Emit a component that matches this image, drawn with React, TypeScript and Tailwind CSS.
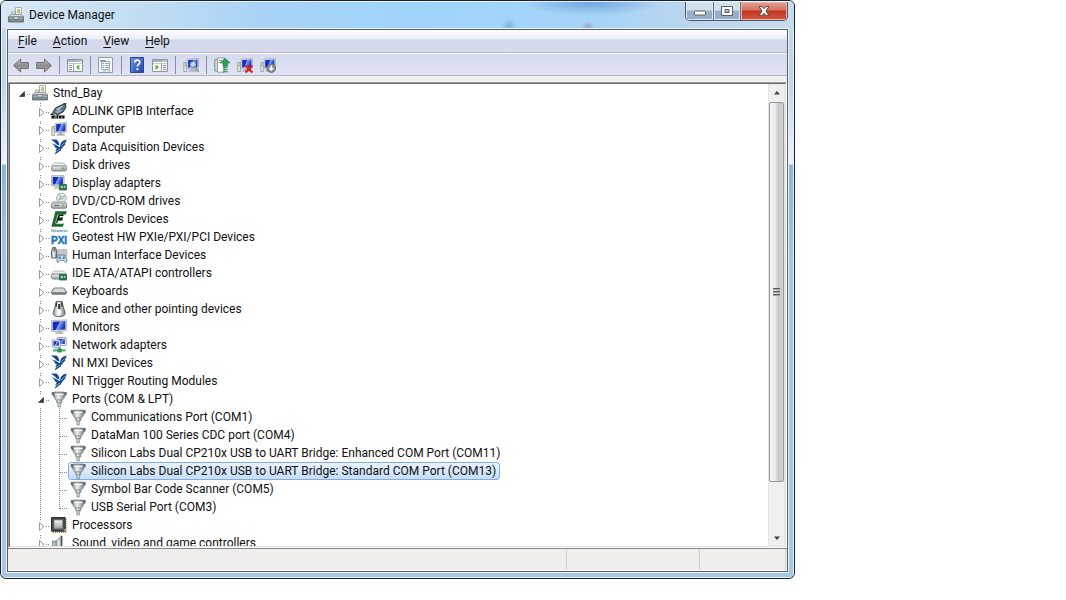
import type { ReactNode } from "react";

type IconName =
  | "root" | "gpib" | "computer" | "ni" | "disk" | "display" | "dvd" | "econtrols" | "geotest"
  | "hid" | "ide" | "keyboard" | "mouse" | "monitor" | "network" | "port" | "cpu" | "sound";

type Item = {
  label: string;
  icon: IconName;
  level: 0 | 1 | 2;
  open?: boolean;
  selected?: boolean;
  last?: boolean;
};

const items: Item[] = [
  { label: "Stnd_Bay", icon: "root", level: 0, open: true },
  { label: "ADLINK GPIB Interface", icon: "gpib", level: 1 },
  { label: "Computer", icon: "computer", level: 1 },
  { label: "Data Acquisition Devices", icon: "ni", level: 1 },
  { label: "Disk drives", icon: "disk", level: 1 },
  { label: "Display adapters", icon: "display", level: 1 },
  { label: "DVD/CD-ROM drives", icon: "dvd", level: 1 },
  { label: "EControls Devices", icon: "econtrols", level: 1 },
  { label: "Geotest HW PXIe/PXI/PCI Devices", icon: "geotest", level: 1 },
  { label: "Human Interface Devices", icon: "hid", level: 1 },
  { label: "IDE ATA/ATAPI controllers", icon: "ide", level: 1 },
  { label: "Keyboards", icon: "keyboard", level: 1 },
  { label: "Mice and other pointing devices", icon: "mouse", level: 1 },
  { label: "Monitors", icon: "monitor", level: 1 },
  { label: "Network adapters", icon: "network", level: 1 },
  { label: "NI MXI Devices", icon: "ni", level: 1 },
  { label: "NI Trigger Routing Modules", icon: "ni", level: 1 },
  { label: "Ports (COM & LPT)", icon: "port", level: 1, open: true },
  { label: "Communications Port (COM1)", icon: "port", level: 2 },
  { label: "DataMan 100 Series CDC port (COM4)", icon: "port", level: 2 },
  { label: "Silicon Labs Dual CP210x USB to UART Bridge: Enhanced COM Port (COM11)", icon: "port", level: 2 },
  { label: "Silicon Labs Dual CP210x USB to UART Bridge: Standard COM Port (COM13)", icon: "port", level: 2, selected: true },
  { label: "Symbol Bar Code Scanner (COM5)", icon: "port", level: 2 },
  { label: "USB Serial Port (COM3)", icon: "port", level: 2, last: true },
  { label: "Processors", icon: "cpu", level: 1 },
  { label: "Sound, video and game controllers", icon: "sound", level: 1 },
];

function Svg({ children }: { children: ReactNode }) {
  return (
    <svg viewBox="0 0 16 16" className="block size-4 shrink-0 overflow-visible" aria-hidden="true">
      {children}
    </svg>
  );
}

function Gradients() {
  return (
    <svg className="absolute size-0" aria-hidden="true">
      <defs>
        <linearGradient id="screen" x1="0" y1="0" x2="1" y2="0.35">
          <stop offset="0" stopColor="#0a1fae" />
          <stop offset="0.48" stopColor="#1434c8" />
          <stop offset="0.55" stopColor="#86a8f2" />
          <stop offset="1" stopColor="#1633b8" />
        </linearGradient>
        <linearGradient id="metal" x1="0" y1="0" x2="0" y2="1">
          <stop offset="0" stopColor="#f4f6f6" />
          <stop offset="1" stopColor="#9aa2a5" />
        </linearGradient>
        <linearGradient id="metalSide" x1="0" y1="0" x2="1" y2="0">
          <stop offset="0" stopColor="#8c9599" />
          <stop offset="0.4" stopColor="#f2f5f6" />
          <stop offset="1" stopColor="#7d868a" />
        </linearGradient>
        <linearGradient id="arrow" x1="0" y1="0" x2="0" y2="1">
          <stop offset="0" stopColor="#c6c6c6" />
          <stop offset="0.5" stopColor="#8f8f8f" />
          <stop offset="1" stopColor="#a9a9a9" />
        </linearGradient>
        <linearGradient id="help" x1="0" y1="0" x2="1" y2="1">
          <stop offset="0" stopColor="#6d8fe0" />
          <stop offset="1" stopColor="#2446a8" />
        </linearGradient>
      </defs>
    </svg>
  );
}

function RootIcon() {
  return (
    <Svg>
      <path d="M7.5 8V0.5h6V8z" fill="#f2f4ee" stroke="#9aa09c" strokeWidth="0.8" />
      <path d="M9.5 2.5h2.2v3.6H9.5z" fill="#c8da6a" stroke="#8ba04a" strokeWidth="0.5" />
      <path d="M3.5 5H7v4H3.5z" fill="#dde2e4" stroke="#8d9598" strokeWidth="0.7" />
      <path d="M0.6 10 2.6 7.6h10.8l2 2.4z" fill="#dfe3e4" stroke="#7b8386" strokeWidth="0.7" />
      <path d="M0.5 10h15v5H0.5z" fill="#7f8a90" stroke="#59636a" strokeWidth="0.8" />
      <path d="M1 10.6h14v1.2H1z" fill="#aeb8bd" />
      <path d="M5.8 9.6h4.4V12H5.8z" fill="#e5e8e9" stroke="#555d60" strokeWidth="0.6" />
    </Svg>
  );
}

function PcGroup() {
  return (
    <g>
      <path d="M0.8 5.5h2.8v9H0.8z" fill="#e3e6e3" stroke="#84908a" strokeWidth="0.7" />
      <path d="M1.5 7h1.4M1.5 8.7h1.4" stroke="#5fa45a" strokeWidth="0.7" />
      <path d="M4.2 2.4 15.4 1.4v9.7L4.2 11.3z" fill="#dfe2e8" stroke="#9da3ae" strokeWidth="0.7" />
      <path d="M5.2 3.3 14.4 2.5v7.7L5.2 10.4z" fill="url(#screen)" />
      <path d="M8 11.3h3.4V13H8zM6 13h7.4v1.5H6z" fill="#c9cdd2" stroke="#8b9197" strokeWidth="0.4" />
    </g>
  );
}

function DiskBody() {
  return (
    <g>
      <path d="M3.2 6h9.6l2.7 3.3H0.5z" fill="#eef0f0" stroke="#9ba1a3" strokeWidth="0.7" />
      <rect x="0.5" y="9" width="15" height="5" rx="1.8" fill="url(#metal)" stroke="#757d80" strokeWidth="0.9" />
      <path d="M10.5 10.4h3v2h-3z" fill="#6cb348" />
    </g>
  );
}

function Chip() {
  return (
    <g>
      <path d="M8.5 9.5h7v5.5h-7z" fill="#2e8053" stroke="#1b5438" strokeWidth="0.7" />
      <path d="M10 11h1.8v2H10zM13 11h1.5v1.4H13z" fill="#b8dfc4" />
    </g>
  );
}

const icons: Record<IconName, ReactNode> = {
  root: <RootIcon />,
  gpib: (
    <Svg>
      <path d="M14 0.5 10.5 2 4.2 5.2 2 9l4.3 3 6-3.2L15 4z" fill="#5d7186" stroke="#1d2732" strokeWidth="0.9" />
      <path d="M5 6.2 11 3l2-.5L7 7z" fill="#c9daea" />
      <path d="m3.6 9 5.4-3.1 2.5 1.6-5.2 2.9z" fill="#90a8be" />
      <path d="M12 1 15.5.8M2 9.5.4 11.5 4 11" stroke="#1d2732" strokeWidth="1.2" fill="none" />
      <path d="M0.5 12.5h13v3H0.5z" fill="#070707" />
      <path d="M3 14h3M7.5 13.4v2M10 14.2h1.6" stroke="#fff" strokeWidth="0.8" />
    </Svg>
  ),
  computer: (
    <Svg>
      <PcGroup />
    </Svg>
  ),
  ni: (
    <Svg>
      <path d="M0 0.6H5.4L7.4 2.6 8.6 6.6 5.6 5.4 3.6 3.2z" fill="#134a8f" />
      <path d="M0.8 4.2 4.6 5.8 8.8 8.2 9.8 4 12.4 1.6 16 0.4 14.6 2.4 15.6 2.8 13.8 4.8 14.4 5.4 11.4 8.4 9.6 11.6 3.6 15.8 5.2 12 4.2 11.6 6 9.6 3.4 8 4 7.2z" fill="#134a8f" />
      <path d="M10 7.4 13.6 3.4M5.2 12.4 9 10.2" stroke="#fff" strokeWidth="0.5" fill="none" />
    </Svg>
  ),
  disk: (
    <Svg>
      <DiskBody />
    </Svg>
  ),
  display: (
    <Svg>
      <path d="M0.6 0.8h12.4v10H0.6z" fill="#dfe2e8" stroke="#8f97a3" strokeWidth="0.8" />
      <path d="M1.8 1.9H11.8v7.6H1.8z" fill="url(#screen)" />
      <path d="M4 11h4v1.5H4zM2.5 12.5H8V14H2.5z" fill="#c3c8cd" />
      <Chip />
    </Svg>
  ),
  dvd: (
    <Svg>
      <circle cx="10.4" cy="5" r="4.8" fill="#e4e8e9" stroke="#8f979a" strokeWidth="0.8" />
      <path d="M10.4 5 8 1.2M10.4 5l3.8-2.2M10.4 5 7 7" stroke="#8fb883" strokeWidth="1" />
      <circle cx="10.4" cy="5" r="1.4" fill="#fff" stroke="#7a8386" strokeWidth="0.8" />
      <path d="M2.8 8.4h10.5l2.2 2H0.5z" fill="#eceeee" stroke="#9ba1a3" strokeWidth="0.6" />
      <rect x="0.5" y="10" width="15" height="5.2" rx="1.3" fill="url(#metal)" stroke="#6f777a" strokeWidth="0.9" />
      <path d="M3 12.4h5.5" stroke="#555d60" />
      <path d="M11.2 11.5h2.4v1.9h-2.4z" fill="#6cb348" />
    </Svg>
  ),
  econtrols: (
    <Svg>
      <path d="M4.4 0.2h11.4l-.9 3.4H7.5L6.7 6.3h5.5l-.9 3.4H5.9l-.8 2.7h7.8l-1 3.4H0.4z" fill="#1d6b2b" />
      <path d="M7.6 3.6h5.2l-.4 1.4H8.8L8 7.6h3.4l-.4 1.4H7.2l-1 3.2H4.6z" fill="#0f1611" />
      <path d="M7 3.6 4.4 12.4M5 12.6h7" stroke="#fff" strokeWidth="0.6" />
    </Svg>
  ),
  geotest: (
    <Svg>
      <text x="0" y="3.2" fontSize="4.4" fontWeight="700" fontFamily="Liberation Sans, sans-serif" fill="#2f8ba0">Geotest</text>
      <text x="0" y="15" fontSize="10" fontWeight="700" fontFamily="Liberation Sans, sans-serif" fill="#2176bd" stroke="#2176bd" strokeWidth="0.5">PXI</text>
    </Svg>
  ),
  hid: (
    <Svg>
      <path d="M6 2.5h9.8V9H6z" fill="#d9dddf" stroke="#9aa1a5" strokeWidth="0.6" />
      <path d="M7 4h8.4M7 5.9h8.4M7 7.6h8.4" stroke="#8a9195" strokeWidth="0.9" strokeDasharray="1 0.6" />
      <path d="M1.6 0.6h3l1.2 5-.5 5.4H.8L.3 6z" fill="url(#metalSide)" stroke="#4c5458" strokeWidth="0.9" />
      <path d="M3.1 1v3.4" stroke="#333" strokeWidth="1" />
      <path d="M7.4 8.5c2-.8 4.9-.8 6.8 0 1.3 1.6 2.3 5.8 1.2 6.8-1.4.6-2.2-1.8-3.2-2H9.6c-1 .2-1.8 2.6-3.3 2-.9-1-.2-5.2 1.1-6.8z" fill="#cbd9e6" stroke="#5c7288" strokeWidth="0.8" />
      <circle cx="8.8" cy="10.8" r="1.2" fill="#3f82c4" />
      <circle cx="12.9" cy="10.8" r="1.2" fill="#3f82c4" />
    </Svg>
  ),
  ide: (
    <Svg>
      <DiskBody />
      <Chip />
    </Svg>
  ),
  keyboard: (
    <Svg>
      <path d="M3.2 5h9.6l2.9 4.3-1 1.9H1.3l-1-1.9z" fill="#84898c" stroke="#54595c" strokeWidth="0.8" />
      <path d="M3.5 5.6h9L14.8 9H1.2z" fill="#eceeee" />
      <path d="M3 6.7h10M2.5 8.1h11.2" stroke="#a2a7a9" strokeWidth="0.7" strokeDasharray="1 0.5" />
    </Svg>
  ),
  mouse: (
    <Svg>
      <path d="M5.2 0.4h5.8l1.2 5.2 1.9 6.2c0 2.9-2 3.9-5.9 3.9s-6-1-6-3.9l2-6.2z" fill="url(#metalSide)" stroke="#484e51" strokeWidth="0.9" />
      <path d="M5.6 1.2 5.2 6M10.6 1.2l.5 4.8" stroke="#373c3f" strokeWidth="1.2" />
      <path d="M7.2 3h2v5h-2z" fill="#2b2f32" />
      <circle cx="8.2" cy="11.3" r="2.2" fill="#fff" />
    </Svg>
  ),
  monitor: (
    <Svg>
      <path d="M0.5 1.6 15.5.8v11L0.5 12.4z" fill="#e3e5e9" stroke="#9ba1aa" strokeWidth="0.7" />
      <path d="M1.7 2.7 14.4 2v8.6L1.7 11.2z" fill="url(#screen)" />
      <path d="M6.5 12.3h3.8v1.2H6.5zM4.5 13.5h7.6v1.4H4.5z" fill="#c9cdd2" stroke="#9ba1a5" strokeWidth="0.4" />
    </Svg>
  ),
  network: (
    <Svg>
      <path d="M6.2 0.6h9v7.9h-9z" fill="#e5e9f2" stroke="#7e89a5" strokeWidth="0.7" />
      <path d="M7.6 1.9h6.2v5H7.6z" fill="url(#screen)" />
      <path d="M1.2 3h8v7.2h-8z" fill="#eceff5" stroke="#7e89a5" strokeWidth="0.7" />
      <path d="M2.5 4.3h5.4v4.4H2.5z" fill="url(#screen)" />
      <path d="M3.3 10.4h4v1.2h-4z" fill="#aeb4bc" />
      <path d="M7.2 10.5h2.6v2.4H7.2z" fill="#45b074" />
      <path d="M2 12.4h12.6v2H2z" fill="#3fae6b" />
      <path d="M6.5 11.8h4.3v3.6H6.5z" fill="#2c8f55" />
    </Svg>
  ),
  port: (
    <Svg>
      <path d="M1.2 2h14v2.2h-14z" fill="#b8bfc2" stroke="#7c8487" strokeWidth="0.6" />
      <path d="M3 1h10.4v5.4L11.6 9H4.8L3 6.4z" fill="url(#metalSide)" stroke="#7c8487" strokeWidth="0.7" />
      <path d="M3.6 1.8h9.2" stroke="#6c7477" strokeWidth="0.8" />
      <path d="M4 3.4h8.4" stroke="#fff" strokeWidth="1.2" />
      <path d="M0.9 1h2v4.2h-1V3.4h-1zM15.5 1h-2v4.2h1V3.4h1z" fill="#5f676a" />
      <path d="M5.6 9h5.2v2.8H5.6z" fill="url(#metalSide)" stroke="#777f82" strokeWidth="0.6" />
      <path d="M6.8 11.8h2.8V16H6.8z" fill="#c3cacc" stroke="#7b8386" strokeWidth="0.6" />
    </Svg>
  ),
  cpu: (
    <Svg>
      <path d="M15 2v13M2 15.2h13" stroke="#a8903f" strokeWidth="1.4" strokeDasharray="1 1" />
      <path d="M0.5 0.5h13.7v13.7H0.5z" fill="#4c4c4c" stroke="#2e2e2e" />
      <path d="M3 3h8.6v8.6H3z" fill="url(#metal)" stroke="#888" strokeWidth="0.7" />
      <path d="M12 12.2h2.6v2.4z" fill="#d9c46a" />
    </Svg>
  ),
  sound: (
    <Svg>
      <path d="M1.5 6h4v6h-4z" fill="#b2bcc2" stroke="#69747a" strokeWidth="0.7" />
      <path d="M5 6 10.7.8v15.4L5 12z" fill="url(#metalSide)" stroke="#6d787e" strokeWidth="0.7" />
      <path d="M10.7 1v15" stroke="#3e4a50" strokeWidth="1.2" />
    </Svg>
  ),
};

function Guides({ item }: { item: Item }) {
  const { level, open, last } = item;
  return (
    <svg viewBox="0 0 12 18" className="block h-[18px] w-3 shrink-0" aria-hidden="true">
      <g stroke="#858585" strokeDasharray="1 1" fill="none">
        {level === 1 && <path d="M3.5 1v3" />}
        {level === 2 && <path d={last ? "M3.5 0v11M4 10.5h8" : "M3.5 0v18M4 10.5h8"} />}
        {level < 2 && <path d="M9 10.5h3" />}
      </g>
      {level < 2 && open && <path d="M6.5 7.5v5H1.5z" fill="#3f3f3f" stroke="#1f1f1f" strokeWidth="0.6" />}
      {level < 2 && !open && <path d="M2.5 6.5v8l4.5-4z" fill="#fff" stroke="#999" />}
    </svg>
  );
}

function Indent({ dotted }: { dotted?: boolean }) {
  return (
    <svg viewBox="0 0 19 18" className="block h-[18px] w-[19px] shrink-0" aria-hidden="true">
      {dotted && <path d="M3.5 0v18" stroke="#858585" strokeDasharray="1 1" />}
    </svg>
  );
}

function TreeRow({ item }: { item: Item }) {
  return (
    <li
      role="treeitem"
      aria-level={item.level + 1}
      aria-expanded={item.open}
      aria-selected={!!item.selected}
      className="flex h-[18px] shrink-0 items-center pl-2"
    >
      {item.level > 0 && <Indent />}
      {item.level > 1 && <Indent dotted />}
      {item.level < 2 ? (
        <button type="button" aria-label={`Toggle ${item.label}`} className="shrink-0">
          <Guides item={item} />
        </button>
      ) : (
        <Guides item={item} />
      )}
      <span
        className={
          item.selected
            ? "flex h-[18px] items-center gap-[5px] rounded-[3px] border border-[#84acdd] bg-linear-to-b from-[#e9f2fd] to-[#c5defa] pr-[3px] pl-px"
            : "flex h-[18px] items-center gap-[5px] border border-transparent pr-[3px] pl-px"
        }
      >
        {icons[item.icon]}
        <span className="leading-4 whitespace-nowrap">{item.label}</span>
      </span>
    </li>
  );
}

function Pane({ flip }: { flip?: boolean }) {
  return (
    <Svg>
      <path d="M0.5 2.5h15v12H0.5z" fill="#f7f8f8" stroke="#8d969c" />
      <path d="M1 3h14v2H1z" fill="#aab4bd" />
      <path d="M11 4h1M13 4h1" stroke="#fff" />
      <path d="M1 6.5h14" stroke="#c3c9cd" />
      {flip ? (
        <g>
          <path d="M9.5 6.5v8" stroke="#9aa2a8" />
          <path d="M3.5 7.7v5.2L7 10.3z" fill="#4fb32c" />
          <path d="M11 8.5h3M11 10.5h3M11 12.5h3" stroke="#89939a" />
        </g>
      ) : (
        <g>
          <path d="M6.5 6.5v8" stroke="#9aa2a8" />
          <path d="M12.3 7.7v5.2L9 10.3z" fill="#4fb32c" />
          <path d="M2 8.5h3M2 10.5h3M2 12.5h3" stroke="#89939a" />
        </g>
      )}
    </Svg>
  );
}

type Tool = { label: string; icon: ReactNode } | null;

const tools: Tool[] = [
  {
    label: "Back",
    icon: (
      <Svg>
        <path d="M0.6 8.5 7.6 2v3.6h7.8v5.8H7.6V15z" fill="url(#arrow)" stroke="#6f6f6f" strokeLinejoin="round" />
      </Svg>
    ),
  },
  {
    label: "Forward",
    icon: (
      <Svg>
        <path d="M15.4 8.5 8.4 2v3.6H0.6v5.8h7.8V15z" fill="url(#arrow)" stroke="#6f6f6f" strokeLinejoin="round" />
      </Svg>
    ),
  },
  null,
  { label: "Show/Hide Console Tree", icon: <Pane /> },
  null,
  {
    label: "Properties",
    icon: (
      <Svg>
        <path d="M0.5 0.5h14v15h-14z" fill="#f7f8f8" stroke="#949ca2" />
        <path d="M3.5 4.5h8v8h-8z" fill="#fff" stroke="#a9b0b5" />
        <path d="M2.5 3.5h5v1h-5z" fill="#fff" stroke="#8b959c" />
        <path d="M4.5 6.5H6M4.5 8.5H6M4.5 10.5H6" stroke="#4ba7c9" />
        <path d="M7 6.5h4M7 8.5h4M7 10.5h4" stroke="#9aa2a8" />
        <path d="M5 14h3M9.5 14h3" stroke="#6bbad4" />
      </Svg>
    ),
  },
  null,
  {
    label: "Help",
    icon: (
      <Svg>
        <path d="M1.5 0.5h13v15h-13z" fill="url(#help)" stroke="#2b4796" />
        <path d="M3 1v14" stroke="#6d8edb" />
        <path d="M5.8 5.6c0-3.3 5-3.2 5-.2 0 2-2.4 2.1-2.4 4.2" fill="none" stroke="#fff" strokeWidth="1.7" />
        <circle cx="8.4" cy="12.2" r="1.1" fill="#fff" />
      </Svg>
    ),
  },
  { label: "Show/Hide Action Pane", icon: <Pane flip /> },
  null,
  {
    label: "Scan for hardware changes",
    icon: (
      <Svg>
        <PcGroup />
        <circle cx="10" cy="7.4" r="3" fill="#cfe0f6" fillOpacity="0.9" stroke="#6f86a2" />
        <path d="m12.2 10 3 4.3" stroke="#8693a1" strokeWidth="1.8" strokeLinecap="round" />
      </Svg>
    ),
  },
  null,
  {
    label: "Update Driver Software",
    icon: (
      <Svg>
        <path d="M0.8 2.5h3.2V14H0.8z" fill="#d5dad7" stroke="#7e8983" strokeWidth="0.9" />
        <path d="M3.5 1h6.7v14.2H3.5z" fill="#fafbf9" stroke="#8d9790" strokeWidth="0.9" />
        <path d="M5 3.5h3.4M5 5.5h2" stroke="#7b8780" strokeWidth="0.9" />
        <path d="M11 1.2 16 6h-2.6v3.3H9V6H6.4z" fill="#2fa05c" stroke="#1e7a40" strokeWidth="0.6" />
        <path d="M8.8 10.8h4.8M8.8 12.8h4.8M8.8 14.8h4.8" stroke="#278b4c" strokeWidth="1.1" />
      </Svg>
    ),
  },
  {
    label: "Uninstall",
    icon: (
      <Svg>
        <PcGroup />
        <path d="m8.6 8.4 6.8 7M15.4 8.4l-6.8 7" stroke="#da1f1f" strokeWidth="2.2" />
      </Svg>
    ),
  },
  {
    label: "Disable",
    icon: (
      <Svg>
        <PcGroup />
        <circle cx="11.3" cy="11.2" r="4.3" fill="#8a8e92" stroke="#5e6265" strokeWidth="0.8" />
        <path d="M11.3 8.4v3.4" stroke="#fff" strokeWidth="1.7" />
        <path d="M8.5 11.2h5.6l-2.8 2.9z" fill="#fff" />
      </Svg>
    ),
  },
];

const menus = [
  { key: "F", rest: "ile" },
  { key: "A", rest: "ction" },
  { key: "V", rest: "iew" },
  { key: "H", rest: "elp" },
];

function TitleBar() {
  return (
    <header className="flex h-[27px] items-start border-t border-[#e4f3fd] bg-[radial-gradient(ellipse_70px_14px_at_590px_0px,#6fa6dc,transparent),radial-gradient(circle_7px_at_587px_26px,#9a9ecb,transparent),radial-gradient(circle_8px_at_508px_24px,#86b4d9,transparent),linear-gradient(90deg,#d8e8f5_0px,#c6def2_120px,#a8d3f6_260px,#9fd3fa_420px,#a6d4f8_600px,#bcd6ec_690px,#c8dbeb_100%)] pr-[6px] pl-[7px]">
      <div className="flex h-full min-w-0 flex-1 items-center gap-[5px]">
        <RootIcon />
        <h1 className="truncate leading-4">Device Manager</h1>
      </div>
      <div className="flex h-[19px] overflow-hidden rounded-b-[5px] border border-t-0 border-[#46586b]">
        <button type="button" aria-label="Minimize" className="flex w-7 items-center justify-center border-r border-[#5d7186] bg-linear-to-b from-[#d3e0ec] from-45% to-[#98afc6] to-50% shadow-[inset_0_0_0_1px_#dbe8f3]">
          <svg viewBox="0 0 14 10" className="h-[10px] w-[14px]" aria-hidden="true">
            <rect x="1.5" y="5" width="11" height="4" rx="0.6" fill="#fff" stroke="#56626e" />
          </svg>
        </button>
        <button type="button" aria-label="Maximize" className="flex w-[27px] items-center justify-center border-r border-[#5d7186] bg-linear-to-b from-[#d3e0ec] from-45% to-[#98afc6] to-50% shadow-[inset_0_0_0_1px_#dbe8f3]">
          <svg viewBox="0 0 12 10" className="h-[10px] w-3" aria-hidden="true">
            <path d="M0.5 0.5h11v9h-11zM4 3.5v3h4v-3z" fill="#fff" fillRule="evenodd" stroke="#56626e" />
          </svg>
        </button>
        <button type="button" aria-label="Close" className="flex w-[46px] items-center justify-center bg-[linear-gradient(#e2a295,#d4705d_45%,#bf3420_50%,#d05a40)] shadow-[inset_0_0_0_1px_#eab5a8]">
          <svg viewBox="0 0 12 10" className="h-[10px] w-3" aria-hidden="true">
            <path d="M1 .6h3.2L6 2.8 7.8.6H11L7.8 5 11 9.4H7.8L6 7.2 4.2 9.4H1L4.2 5z" fill="#fff" stroke="#5b4a50" />
          </svg>
        </button>
      </div>
    </header>
  );
}

function ScrollBar() {
  return (
    <div className="flex w-[17px] shrink-0 flex-col border-x border-[#e3e3e3] bg-[#efefef]">
      <button type="button" aria-label="Scroll up" className="flex h-[18px] items-center justify-center">
        <svg viewBox="0 0 6 4" className="h-1 w-[6px]" aria-hidden="true">
          <path d="m3 0 3 3.5H0z" fill="#404040" />
        </svg>
      </button>
      <div className="min-h-0 flex-1">
        <div className="flex h-[89%] items-center justify-center rounded-[2px] border border-[#969696] bg-[linear-gradient(90deg,#f6f6f6,#e8e8ea_45%,#c6c6ca_60%,#d4d4d8)]">
          <svg viewBox="0 0 7 9" className="h-[9px] w-[7px]" aria-hidden="true">
            <path d="M0 .5h7M0 3.5h7M0 6.5h7" stroke="#5a5a5a" />
            <path d="M0 1.5h7M0 4.5h7M0 7.5h7" stroke="#a5a5a5" />
          </svg>
        </div>
      </div>
      <button type="button" aria-label="Scroll down" className="flex h-[17px] items-center justify-center">
        <svg viewBox="0 0 6 4" className="h-1 w-[6px]" aria-hidden="true">
          <path d="m3 4 3-3.5H0z" fill="#404040" />
        </svg>
      </button>
    </div>
  );
}

export default function App() {
  return (
    <div className="h-screen overflow-hidden bg-white pb-[21px] font-['Roboto','Noto_Sans',sans-serif] text-[12px] text-[#101010]">
      <Gradients />
      <main className="flex h-full w-full max-w-[795px] flex-col overflow-hidden rounded-[6px] border border-[#1a222e] bg-[linear-gradient(#c4dbee,#bdd4e9_80px,#edf3f7_163px,#8fb4d6_164px,#a4c4e2_260px,#a9c7e4)]">
        <TitleBar />
        <div className="flex min-h-0 flex-1 flex-col border border-t-0 border-[#e6f2fb] px-1 pb-1">
          <div className="flex min-h-0 flex-1 flex-col border border-[#f0f7fc]">
            <div className="flex min-h-0 flex-1 flex-col border border-[#4d5f70] bg-[#f0f0f0]">
              <nav aria-label="Menu bar" className="flex h-[23px] shrink-0 items-center border-b border-[#b3b7cb] bg-[linear-gradient(#fdfeff,#e9eef7_9px,#d3d9ec_10px,#d6dbee)] px-[2px]">
                {menus.map((m) => (
                  <button key={m.key} type="button" className="px-2 leading-4">
                    <span className="underline underline-offset-2">{m.key}</span>
                    {m.rest}
                  </button>
                ))}
              </nav>
              <div role="toolbar" aria-label="Tools" className="flex h-[23px] shrink-0 items-center gap-[7px] border-t border-b border-t-white border-b-[#b3b7cb] bg-linear-to-b from-[#d5daee] to-[#e0e4f4] px-[5px]">
                {tools.map((t, i) =>
                  t ? (
                    <button key={t.label} type="button" aria-label={t.label} title={t.label}>
                      {t.icon}
                    </button>
                  ) : (
                    <span key={i} className="h-[18px] w-px bg-[#8a8f9e]" />
                  ),
                )}
              </div>
              <div className="mt-[6px] flex min-h-0 flex-1 border border-t-[#a0a0a0] border-r-white border-b-white border-l-[#a0a0a0]">
                <div className="flex min-h-0 flex-1 border border-t-[#696969] border-r-[#e3e3e3] border-b-[#e3e3e3] border-l-[#696969] bg-white">
                  <ul role="tree" aria-label="Devices" className="flex min-w-0 flex-1 flex-col overflow-hidden">
                    {items.map((item) => (
                      <TreeRow key={item.label} item={item} />
                    ))}
                  </ul>
                  <ScrollBar />
                </div>
              </div>
              <footer className="flex h-[23px] shrink-0 border-t border-b border-t-[#85888e] border-b-white bg-[#f0eded] pr-px">
                <span className="flex-1 border-r border-[#d2cfcf]" />
                <span className="w-[133px] border-r border-[#d2cfcf]" />
                <span className="w-[86px] border-r border-[#d2cfcf]" />
              </footer>
            </div>
          </div>
        </div>
      </main>
    </div>
  );
}
